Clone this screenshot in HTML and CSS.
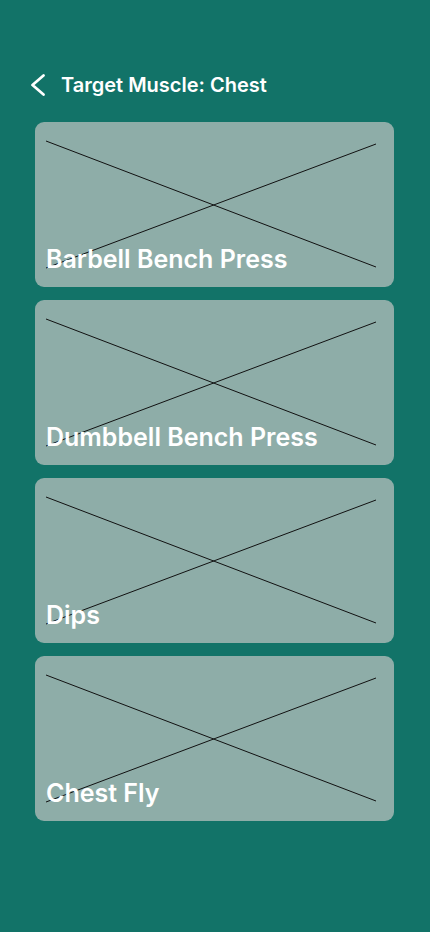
FILE: index.html
```html
<!DOCTYPE html>
<html lang="en">
<head>
<meta charset="utf-8">
<title>Target Muscle: Chest</title>
<link rel="stylesheet" href="styles.css">
</head>
<body>
<div class="screen">
  <header class="header">
    <button class="back" aria-label="Back">
      <svg width="17" height="22" viewBox="0 0 17 22"><path d="M14.5 1.5 L3.5 11 L14.5 20.5" fill="none" stroke="#ffffff" stroke-width="2.7" stroke-linecap="round" stroke-linejoin="round"/></svg>
    </button>
    <h1 class="title">Target Muscle: Chest</h1>
  </header>
  <main class="list">
    <div class="card">
      <svg class="ph" viewBox="0 0 330 127" preserveAspectRatio="none"><line x1="0" y1="0" x2="330" y2="126" /><line x1="0" y1="127" x2="330" y2="3" /></svg>
      <span class="name">Barbell Bench Press</span>
    </div>
    <div class="card">
      <svg class="ph" viewBox="0 0 330 127" preserveAspectRatio="none"><line x1="0" y1="0" x2="330" y2="126" /><line x1="0" y1="127" x2="330" y2="3" /></svg>
      <span class="name">Dumbbell Bench Press</span>
    </div>
    <div class="card">
      <svg class="ph" viewBox="0 0 330 127" preserveAspectRatio="none"><line x1="0" y1="0" x2="330" y2="126" /><line x1="0" y1="127" x2="330" y2="3" /></svg>
      <span class="name">Dips</span>
    </div>
    <div class="card">
      <svg class="ph" viewBox="0 0 330 127" preserveAspectRatio="none"><line x1="0" y1="0" x2="330" y2="126" /><line x1="0" y1="127" x2="330" y2="3" /></svg>
      <span class="name">Chest Fly</span>
    </div>
  </main>
</div>
</body>
</html>
```
FILE: styles.css
```css
* { box-sizing: border-box; }
html, body {
  margin: 0;
  padding: 0;
  background: #127368;
}
body {
  font-family: Inter, "Noto Sans", sans-serif;
  color: #ffffff;
  width: 430px;
  height: 932px;
}
.screen {
  padding: 73px 0 0 0;
}
.header {
  display: flex;
  align-items: center;
  height: 24px;
  padding-left: 29px;
}
.back {
  background: none;
  border: 0;
  padding: 0;
  margin: 0;
  width: 17px;
  height: 22px;
  display: flex;
  cursor: pointer;
}
.title {
  margin: 0 0 0 15px;
  font-size: 20px;
  line-height: 24px;
  font-weight: 600;
}
.list {
  margin-top: 25px;
  padding-left: 35px;
  display: flex;
  flex-direction: column;
  gap: 13px;
}
.card {
  position: relative;
  width: 359px;
  height: 165px;
  border-radius: 9px;
  background: #8eada8;
  display: flex;
  flex-direction: column;
  justify-content: flex-end;
  padding: 0 11px 13px 11px;
}
.ph {
  position: absolute;
  left: 11px;
  top: 19px;
  width: 330px;
  height: 127px;
  overflow: visible;
}
.ph line {
  stroke: #111111;
  stroke-width: 1;
}
.name {
  position: relative;
  font-size: 25px;
  line-height: 30px;
  font-weight: 600;
}
```
